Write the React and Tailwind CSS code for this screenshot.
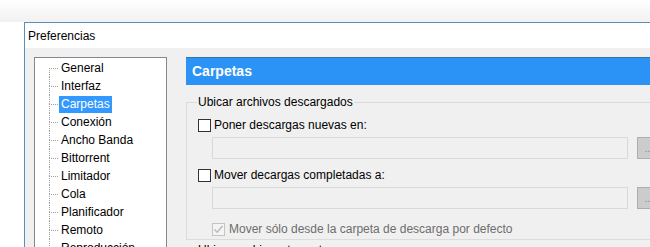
import React from "react";

const items = [
  "General",
  "Interfaz",
  "Carpetas",
  "Conexión",
  "Ancho Banda",
  "Bittorrent",
  "Limitador",
  "Cola",
  "Planificador",
  "Remoto",
  "Reproducción",
];

function Box({ checked, disabled }) {
  return (
    <span
      className={
        "w-[13px] h-[13px] shrink-0 border flex items-center justify-center " +
        (disabled ? "border-[#c4c4c4] bg-[#f4f4f4]" : "border-[#333333] bg-white")
      }
    >
      {checked && (
        <svg width="11" height="11" viewBox="0 0 11 11">
          <path d="M1.5 5.5 L4.2 8.3 L9.5 2" fill="none" stroke="#b8b8b8" strokeWidth="1.4" />
        </svg>
      )}
    </span>
  );
}

function PathRow() {
  return (
    <div className="flex mt-[4px] ml-[14px] gap-[9px] h-[22px]">
      <div className="w-[416px] h-full border border-[#d9d9d9] bg-[#f0f0f0]" />
      <div className="w-[24px] h-full border border-[#adadad] bg-[#cccccc] text-[#838383] text-[10px] flex items-end justify-center pb-[4px] leading-none">
        ...
      </div>
    </div>
  );
}

export default function App() {
  return (
    <div
      className="w-[650px] h-[247px] overflow-hidden bg-white text-[12px] text-black"
      style={{ fontFamily: '"Liberation Sans", Arial, sans-serif' }}
    >
      <div className="h-[22px] bg-gradient-to-b from-white to-[#f1f1f1]" />
      <div className="pl-[24px]">
        <div className="w-[720px] border-l border-t border-[#5b8fb8]">
          {/* barra de título */}
          <div className="h-[25px] bg-white pl-[3px] flex items-center">Preferencias</div>

          <div className="bg-[#f0f0f0] flex pl-[9px] pt-[9px] gap-[19px] h-[300px]">
            {/* árbol */}
            <div className="w-[133px] h-[260px] border border-[#828790] bg-white pt-[1px] pl-[14px]">
              <ul>
                {items.map((it, i) => (
                  <li key={it} className="flex items-center h-[18px]">
                    <div className="w-[9px] self-stretch flex flex-col">
                      <div className={"h-[9px] " + (i === 0 ? "" : "border-l border-dotted border-[#a0a0a0]")} />
                      <div className="h-[9px] border-l border-t border-dotted border-[#a0a0a0]" />
                    </div>
                    <span
                      className={
                        "ml-[1px] px-[2px] h-[17px] leading-[17px] whitespace-nowrap " +
                        (it === "Carpetas" ? "bg-[#3399ff] text-white" : "")
                      }
                    >
                      {it}
                    </span>
                  </li>
                ))}
              </ul>
            </div>

            {/* panel derecho */}
            <div className="w-[520px]">
              <div className="h-[28px] border-t border-[#3f6f9f] bg-[#2b93f5] text-white font-bold text-[14px] pl-[6px] flex items-center">
                Carpetas
              </div>

              <fieldset className="mt-[10px] border border-[#dcdcdc] pl-[11px] pb-[2px]">
                <legend className="ml-[-1px] px-[1px] leading-[14px]">Ubicar archivos descargados</legend>
                <div className="mt-[8px] h-[16px] flex items-center gap-[3px]">
                  <Box />
                  <span>Poner descargas nuevas en:</span>
                </div>
                <PathRow />
                <div className="mt-[8px] h-[16px] flex items-center gap-[3px]">
                  <Box />
                  <span>Mover decargas completadas a:</span>
                </div>
                <PathRow />
                <div className="mt-[12px] ml-[14px] h-[16px] flex items-center gap-[4px] text-[#6d6d6d]">
                  <Box checked disabled />
                  <span>Mover sólo desde la carpeta de descarga por defecto</span>
                </div>
              </fieldset>

              <fieldset className="mt-[3px] border border-[#dcdcdc] pl-[11px] h-[40px]">
                <legend className="ml-[-1px] px-[1px] leading-[14px]">Ubicar archivos .torrent</legend>
              </fieldset>
            </div>
          </div>
        </div>
      </div>
    </div>
  );
}
